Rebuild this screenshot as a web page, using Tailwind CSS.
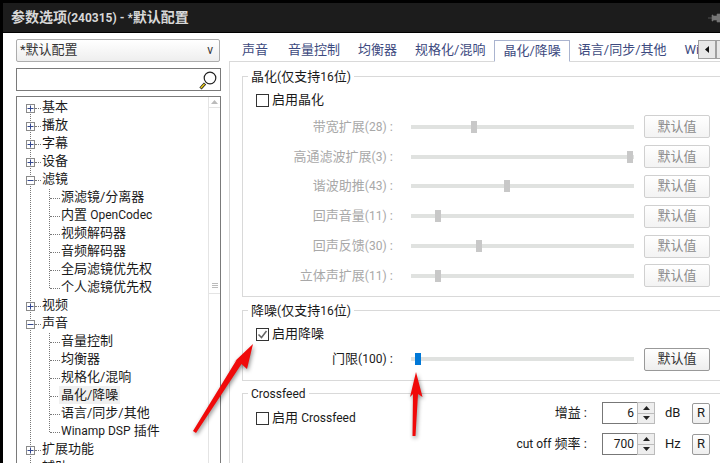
<!DOCTYPE html>
<html lang="en">
<head>
    <meta charset="UTF-8">
    <meta name="viewport" content="width=device-width, initial-scale=1.0">
    <title>参数选项</title>
    <script src="https://cdn.jsdelivr.net/npm/@tailwindcss/browser@4"></script>
</head>
<body class="w-[720px] h-[463px] overflow-hidden bg-white text-[13px] leading-[18px] text-[#1a1a1a] font-['Roboto','Noto_Sans_CJK_SC',sans-serif]">
<div class="relative w-[720px] h-[463px] overflow-hidden border-l-[3px] border-black flex flex-col">

    <!-- title bar -->
    <div class="h-[33px] shrink-0 border-t-[3px] border-b border-black bg-[#1c1c1c] flex items-center justify-between pl-[8px] text-[14px] font-bold text-[#d8d8d8]">
        <span>参数选项<span class="text-[12px]">(240315) - *</span>默认配置</span>
        <svg width="12" height="12" viewBox="0 0 12 12"><path d="M0 6h4M4 3h1v6H4zM5 4h6v4H5zM9 2h3v8H9z" fill="#777" stroke="#777" stroke-width="0.6"/></svg>
    </div>

    <div class="flex flex-1 min-h-0">
        <!-- left column -->
        <div class="w-[226px] shrink-0 pl-[13px] pt-[6px] flex flex-col">
            <div class="w-[204px] h-[23px] shrink-0 border border-[#adadad] rounded-[2px] bg-gradient-to-b from-white to-[#eeeeee] flex items-center justify-between pl-[3px] pr-[6px] pb-[1px] text-[#333]">
                <span>*默认配置</span><span class="text-[12px]">v</span>
            </div>
            <div class="w-[205px] h-[23px] shrink-0 mt-[6px] border border-[#7a7a7a] flex items-center justify-end pr-[2px]">
                <svg width="20" height="20" viewBox="0 0 20 20">
                    <path d="M2.5 18.5L7 13.5" stroke="#222" stroke-width="3"/>
                    <path d="M2.8 18L6.5 14" stroke="#f2d21b" stroke-width="1.4"/>
                    <circle cx="12" cy="8" r="5.8" fill="#fff" stroke="#222" stroke-width="1.2"/>
                </svg>
            </div>
            <div class="relative w-[205px] flex-1 mt-[5px] border border-[#7a7a7a] border-b-0 overflow-hidden flex">
                <div class="relative flex-1 pt-[2px] [&_div>span:last-child]:relative [&_div>span:last-child]:-top-px">
                    <div class="absolute left-[13px] top-[10px] bottom-0 border-l border-dotted border-[#777]"></div>

                    <div class="relative flex items-center h-[18px] pl-[9px]"><span class="w-[9px] h-[9px] border border-[#8a8a8a] bg-white flex items-center justify-center"><svg width="7" height="7" viewBox="0 0 7 7"><path d="M0.5 3.5h6M3.5 0.5v6" stroke="#34488f"/></svg></span><span class="w-[6px] border-t border-dotted border-[#777]"></span><span class="ml-[1px]">基本</span></div>
                    <div class="relative flex items-center h-[18px] pl-[9px]"><span class="w-[9px] h-[9px] border border-[#8a8a8a] bg-white flex items-center justify-center"><svg width="7" height="7" viewBox="0 0 7 7"><path d="M0.5 3.5h6M3.5 0.5v6" stroke="#34488f"/></svg></span><span class="w-[6px] border-t border-dotted border-[#777]"></span><span class="ml-[1px]">播放</span></div>
                    <div class="relative flex items-center h-[18px] pl-[9px]"><span class="w-[9px] h-[9px] border border-[#8a8a8a] bg-white flex items-center justify-center"><svg width="7" height="7" viewBox="0 0 7 7"><path d="M0.5 3.5h6M3.5 0.5v6" stroke="#34488f"/></svg></span><span class="w-[6px] border-t border-dotted border-[#777]"></span><span class="ml-[1px]">字幕</span></div>
                    <div class="relative flex items-center h-[18px] pl-[9px]"><span class="w-[9px] h-[9px] border border-[#8a8a8a] bg-white flex items-center justify-center"><svg width="7" height="7" viewBox="0 0 7 7"><path d="M0.5 3.5h6M3.5 0.5v6" stroke="#34488f"/></svg></span><span class="w-[6px] border-t border-dotted border-[#777]"></span><span class="ml-[1px]">设备</span></div>
                    <div class="relative flex items-center h-[18px] pl-[9px]"><span class="w-[9px] h-[9px] border border-[#8a8a8a] bg-white flex items-center justify-center"><svg width="7" height="7" viewBox="0 0 7 7"><path d="M0.5 3.5h6" stroke="#34488f"/></svg></span><span class="w-[6px] border-t border-dotted border-[#777]"></span><span class="ml-[1px]">滤镜</span></div>

                    <div class="relative">
                        <div class="absolute left-[32px] top-0 h-[99px] border-l border-dotted border-[#777]"></div>
                        <div class="flex items-center h-[18px] pl-[33px]"><span class="w-[10px] border-t border-dotted border-[#777]"></span><span class="ml-[1px]">源滤镜/分离器</span></div>
                        <div class="flex items-center h-[18px] pl-[33px]"><span class="w-[10px] border-t border-dotted border-[#777]"></span><span class="ml-[1px]">内置 <span class="text-[12px]">OpenCodec</span></span></div>
                        <div class="flex items-center h-[18px] pl-[33px]"><span class="w-[10px] border-t border-dotted border-[#777]"></span><span class="ml-[1px]">视频解码器</span></div>
                        <div class="flex items-center h-[18px] pl-[33px]"><span class="w-[10px] border-t border-dotted border-[#777]"></span><span class="ml-[1px]">音频解码器</span></div>
                        <div class="flex items-center h-[18px] pl-[33px]"><span class="w-[10px] border-t border-dotted border-[#777]"></span><span class="ml-[1px]">全局滤镜优先权</span></div>
                        <div class="flex items-center h-[18px] pl-[33px]"><span class="w-[10px] border-t border-dotted border-[#777]"></span><span class="ml-[1px]">个人滤镜优先权</span></div>
                    </div>

                    <div class="relative flex items-center h-[18px] pl-[9px]"><span class="w-[9px] h-[9px] border border-[#8a8a8a] bg-white flex items-center justify-center"><svg width="7" height="7" viewBox="0 0 7 7"><path d="M0.5 3.5h6M3.5 0.5v6" stroke="#34488f"/></svg></span><span class="w-[6px] border-t border-dotted border-[#777]"></span><span class="ml-[1px]">视频</span></div>
                    <div class="relative flex items-center h-[18px] pl-[9px]"><span class="w-[9px] h-[9px] border border-[#8a8a8a] bg-white flex items-center justify-center"><svg width="7" height="7" viewBox="0 0 7 7"><path d="M0.5 3.5h6" stroke="#34488f"/></svg></span><span class="w-[6px] border-t border-dotted border-[#777]"></span><span class="ml-[1px]">声音</span></div>

                    <div class="relative">
                        <div class="absolute left-[32px] top-0 h-[99px] border-l border-dotted border-[#777]"></div>
                        <div class="flex items-center h-[18px] pl-[33px]"><span class="w-[10px] border-t border-dotted border-[#777]"></span><span class="ml-[1px]">音量控制</span></div>
                        <div class="flex items-center h-[18px] pl-[33px]"><span class="w-[10px] border-t border-dotted border-[#777]"></span><span class="ml-[1px]">均衡器</span></div>
                        <div class="flex items-center h-[18px] pl-[33px]"><span class="w-[10px] border-t border-dotted border-[#777]"></span><span class="ml-[1px]">规格化/混响</span></div>
                        <div class="flex items-center h-[18px] pl-[33px]"><span class="w-[10px] border-t border-dotted border-[#777]"></span><span class="ml-[-1px] pl-[2px] pr-[2px] bg-[#f0f0f0]">晶化/降噪</span></div>
                        <div class="flex items-center h-[18px] pl-[33px]"><span class="w-[10px] border-t border-dotted border-[#777]"></span><span class="ml-[1px]">语言/同步/其他</span></div>
                        <div class="flex items-center h-[18px] pl-[33px]"><span class="w-[10px] border-t border-dotted border-[#777]"></span><span class="ml-[1px]"><span class="text-[12px]">Winamp DSP</span> 插件</span></div>
                    </div>

                    <div class="relative flex items-center h-[18px] pl-[9px]"><span class="w-[9px] h-[9px] border border-[#8a8a8a] bg-white flex items-center justify-center"><svg width="7" height="7" viewBox="0 0 7 7"><path d="M0.5 3.5h6M3.5 0.5v6" stroke="#34488f"/></svg></span><span class="w-[6px] border-t border-dotted border-[#777]"></span><span class="ml-[1px]">扩展功能</span></div>
                    <div class="relative flex items-center h-[18px] pl-[9px]"><span class="w-[9px] h-[9px] border border-[#8a8a8a] bg-white flex items-center justify-center"><svg width="7" height="7" viewBox="0 0 7 7"><path d="M0.5 3.5h6M3.5 0.5v6" stroke="#34488f"/></svg></span><span class="w-[6px] border-t border-dotted border-[#777]"></span><span class="ml-[1px]">辅助</span></div>
                </div>
                <!-- tree scrollbar -->
                <div class="w-[12px] shrink-0 border-l border-[#e4e4e4] flex flex-col">
                    <div class="h-[11px] border-b border-[#e4e4e4] flex items-center justify-center"><svg width="7" height="4" viewBox="0 0 7 4"><path d="M3.5 0L7 4H0z" fill="#bbb"/></svg></div>
                    <div class="h-[186px] border-b border-[#e4e4e4] flex items-end justify-center pb-[5px]"><div class="w-[6px] h-[5px] border-y border-[#bbb] bg-[linear-gradient(#fff_33%,#bbb_33%,#bbb_66%,#fff_66%)]"></div></div>
                </div>
            </div>
        </div>

        <!-- right column -->
        <div class="flex-1 min-w-0 pt-[6px]">
            <!-- tabs -->
            <div class="relative h-[23px] border-b border-[#d9d9d9] flex items-end pl-[4px] text-[#3d4a80] whitespace-nowrap">
                <span class="h-[22px] px-[9px] flex items-center">声音</span>
                <span class="h-[22px] ml-[2px] px-[9px] flex items-center">音量控制</span>
                <span class="h-[22px] px-[9px] flex items-center">均衡器</span>
                <span class="h-[22px] px-[9px] flex items-center">规格化/混响</span>
                <span class="h-[22px] px-[8px] flex items-center border border-b-white border-[#aab4cf] -mb-px bg-white">晶化/降噪</span>
                <span class="h-[22px] ml-[-1px] px-[9px] flex items-center">语言/同步/其他</span>
                <span class="h-[22px] px-[9px] flex items-center">Wi</span>
                <div class="absolute right-0 top-[1px] flex bg-white">
                    <div class="w-[18px] h-[19px] border border-[#a0a0a0] bg-[#e8e8e8] flex items-center justify-center"><svg width="4" height="7" viewBox="0 0 4 7"><path d="M4 0v7L0 3.5z" fill="#111"/></svg></div>
                    <div class="w-[4px] h-[19px] border-y border-l border-[#a0a0a0] bg-[#e8e8e8]"></div>
                </div>
            </div>

            <div class="border-l border-[#d9d9d9] pl-[12px] pt-[14px] flex flex-col">
                <!-- group 1 -->
                <div class="relative h-[221px] border border-r-0 border-[#d9d9d9] pt-[14px]">
                    <span class="absolute left-[5px] -top-[9px] bg-white px-[3px]">晶化<span class="text-[12px]">(</span>仅支持<span class="text-[12px]">16</span>位<span class="text-[12px]">)</span></span>
                    <label class="flex items-center h-[18px] pl-[13px]"><span class="w-[13px] h-[13px] border border-[#333] bg-white"></span><span class="ml-[3px]">启用晶化</span></label>
                    <div class="mt-[3px] text-[#a8a8a8]">
                        <div class="flex items-center h-[29.8px]"><span class="w-[150px] text-right">带宽扩展<span class="text-[12px]">(28)</span> :</span><div class="relative ml-[18px] w-[223px] h-[4px] bg-[#e0e2e0]"><div class="absolute left-[60px] -top-[4px] w-[6px] h-[12px] bg-[#c8c8c8]"></div></div><span class="ml-[10px] w-[66px] h-[23px] border border-[#d0d0d0] rounded-[2px] bg-gradient-to-b from-white to-[#f3f3f3] flex items-center justify-center text-[#8c8c8c]">默认值</span></div>
                        <div class="flex items-center h-[29.8px]"><span class="w-[150px] text-right">高通滤波扩展<span class="text-[12px]">(3)</span> :</span><div class="relative ml-[18px] w-[223px] h-[4px] bg-[#e0e2e0]"><div class="absolute left-[216px] -top-[4px] w-[6px] h-[12px] bg-[#c8c8c8]"></div></div><span class="ml-[10px] w-[66px] h-[23px] border border-[#d0d0d0] rounded-[2px] bg-gradient-to-b from-white to-[#f3f3f3] flex items-center justify-center text-[#8c8c8c]">默认值</span></div>
                        <div class="flex items-center h-[29.8px]"><span class="w-[150px] text-right">谐波助推<span class="text-[12px]">(43)</span> :</span><div class="relative ml-[18px] w-[223px] h-[4px] bg-[#e0e2e0]"><div class="absolute left-[93px] -top-[4px] w-[6px] h-[12px] bg-[#c8c8c8]"></div></div><span class="ml-[10px] w-[66px] h-[23px] border border-[#d0d0d0] rounded-[2px] bg-gradient-to-b from-white to-[#f3f3f3] flex items-center justify-center text-[#8c8c8c]">默认值</span></div>
                        <div class="flex items-center h-[29.8px]"><span class="w-[150px] text-right">回声音量<span class="text-[12px]">(11)</span> :</span><div class="relative ml-[18px] w-[223px] h-[4px] bg-[#e0e2e0]"><div class="absolute left-[24px] -top-[4px] w-[6px] h-[12px] bg-[#c8c8c8]"></div></div><span class="ml-[10px] w-[66px] h-[23px] border border-[#d0d0d0] rounded-[2px] bg-gradient-to-b from-white to-[#f3f3f3] flex items-center justify-center text-[#8c8c8c]">默认值</span></div>
                        <div class="flex items-center h-[29.8px]"><span class="w-[150px] text-right">回声反馈<span class="text-[12px]">(30)</span> :</span><div class="relative ml-[18px] w-[223px] h-[4px] bg-[#e0e2e0]"><div class="absolute left-[65px] -top-[4px] w-[6px] h-[12px] bg-[#c8c8c8]"></div></div><span class="ml-[10px] w-[66px] h-[23px] border border-[#d0d0d0] rounded-[2px] bg-gradient-to-b from-white to-[#f3f3f3] flex items-center justify-center text-[#8c8c8c]">默认值</span></div>
                        <div class="flex items-center h-[29.8px]"><span class="w-[150px] text-right">立体声扩展<span class="text-[12px]">(11)</span> :</span><div class="relative ml-[18px] w-[223px] h-[4px] bg-[#e0e2e0]"><div class="absolute left-[24px] -top-[4px] w-[6px] h-[12px] bg-[#c8c8c8]"></div></div><span class="ml-[10px] w-[66px] h-[23px] border border-[#d0d0d0] rounded-[2px] bg-gradient-to-b from-white to-[#f3f3f3] flex items-center justify-center text-[#8c8c8c]">默认值</span></div>
                    </div>
                </div>

                <!-- group 2 -->
                <div class="relative mt-[13px] h-[71px] border border-r-0 border-[#d9d9d9] pt-[14px]">
                    <span class="absolute left-[5px] -top-[9px] bg-white px-[3px]">降噪<span class="text-[12px]">(</span>仅支持<span class="text-[12px]">16</span>位<span class="text-[12px]">)</span></span>
                    <label class="flex items-center h-[18px] pl-[13px]"><span class="w-[13px] h-[13px] border border-[#333] bg-white flex items-center justify-center"><svg width="11" height="11" viewBox="0 0 11 11"><path d="M1.5 5.5l3 3 5-6.5" fill="none" stroke="#666" stroke-width="1.5"/></svg></span><span class="ml-[3px]">启用降噪</span></label>
                    <div class="flex items-center h-[30px] mt-[1px]"><span class="w-[150px] text-right">门限<span class="text-[12px]">(100)</span> :</span><div class="relative ml-[18px] w-[223px] h-[4px] bg-[#e0e2e0]"><div class="absolute left-[4px] -top-[4px] w-[6px] h-[12px] bg-[#0078d7]"></div></div><span class="ml-[10px] w-[66px] h-[23px] border border-[#999] rounded-[2px] bg-gradient-to-b from-white to-[#eeeeee] flex items-center justify-center text-[#333]">默认值</span></div>
                </div>

                <!-- group 3 -->
                <div class="relative mt-[12px] h-[80px] border border-r-0 border-[#d9d9d9] flex justify-between">
                    <span class="absolute left-[5px] -top-[9px] bg-white px-[3px] text-[12px]">Crossfeed</span>
                    <label class="flex items-center h-[18px] pl-[13px] mt-[15px]"><span class="w-[13px] h-[13px] border border-[#333] bg-white"></span><span class="ml-[3px]">启用 <span class="text-[12px]">Crossfeed</span></span></label>
                    <div class="pt-[8px] pr-[10px] flex flex-col items-end gap-[9px]">
                        <div class="flex items-center h-[22px]"><span class="mr-[15px]">增益 :</span><div class="flex items-center w-[53px] h-[22px] border border-[#777] border-r-0"><span class="flex-1 text-right pr-[3px] text-[12px]">6</span><div class="w-[18px] h-[22px] border border-[#bbb] flex flex-col"><span class="flex-1 border-b border-[#bbb] bg-[#eee] flex items-center justify-center"><svg width="7" height="4" viewBox="0 0 7 4"><path d="M3.5 0L7 4H0z" fill="#222"/></svg></span><span class="flex-1 bg-[#eee] flex items-center justify-center"><svg width="7" height="4" viewBox="0 0 7 4"><path d="M3.5 4L7 0H0z" fill="#222"/></svg></span></div></div><span class="w-[37px] pl-[10px]">dB</span><span class="w-[18px] h-[21px] border border-[#999] rounded-[2px] bg-gradient-to-b from-white to-[#eee] flex items-center justify-center">R</span></div>
                        <div class="flex items-center h-[22px]"><span class="mr-[15px]"><span class="text-[12px]">cut off</span> 频率 :</span><div class="flex items-center w-[53px] h-[22px] border border-[#777] border-r-0"><span class="flex-1 text-right pr-[3px] text-[12px]">700</span><div class="w-[18px] h-[22px] border border-[#bbb] flex flex-col"><span class="flex-1 border-b border-[#bbb] bg-[#eee] flex items-center justify-center"><svg width="7" height="4" viewBox="0 0 7 4"><path d="M3.5 0L7 4H0z" fill="#222"/></svg></span><span class="flex-1 bg-[#eee] flex items-center justify-center"><svg width="7" height="4" viewBox="0 0 7 4"><path d="M3.5 4L7 0H0z" fill="#222"/></svg></span></div></div><span class="w-[37px] pl-[10px]">Hz</span><span class="w-[18px] h-[21px] border border-[#999] rounded-[2px] bg-gradient-to-b from-white to-[#eee] flex items-center justify-center">R</span></div>
                    </div>
                </div>
            </div>
        </div>
    </div>

    <!-- red annotation arrows -->
    <svg class="absolute left-[-3px] top-0 pointer-events-none drop-shadow-[1px_2px_2px_rgba(0,0,0,0.45)]" width="720" height="463" viewBox="0 0 720 463">
        <g fill="#f00a0a">
            <path d="M253 344L247 369L241.5 364L196 433L193 431L236.5 360L233 363z"/>
            <path d="M416 372L422.5 397L418 394L415.5 436L412.5 436L413 394L410 397z"/>
        </g>
    </svg>
</div>
</body>
</html>
